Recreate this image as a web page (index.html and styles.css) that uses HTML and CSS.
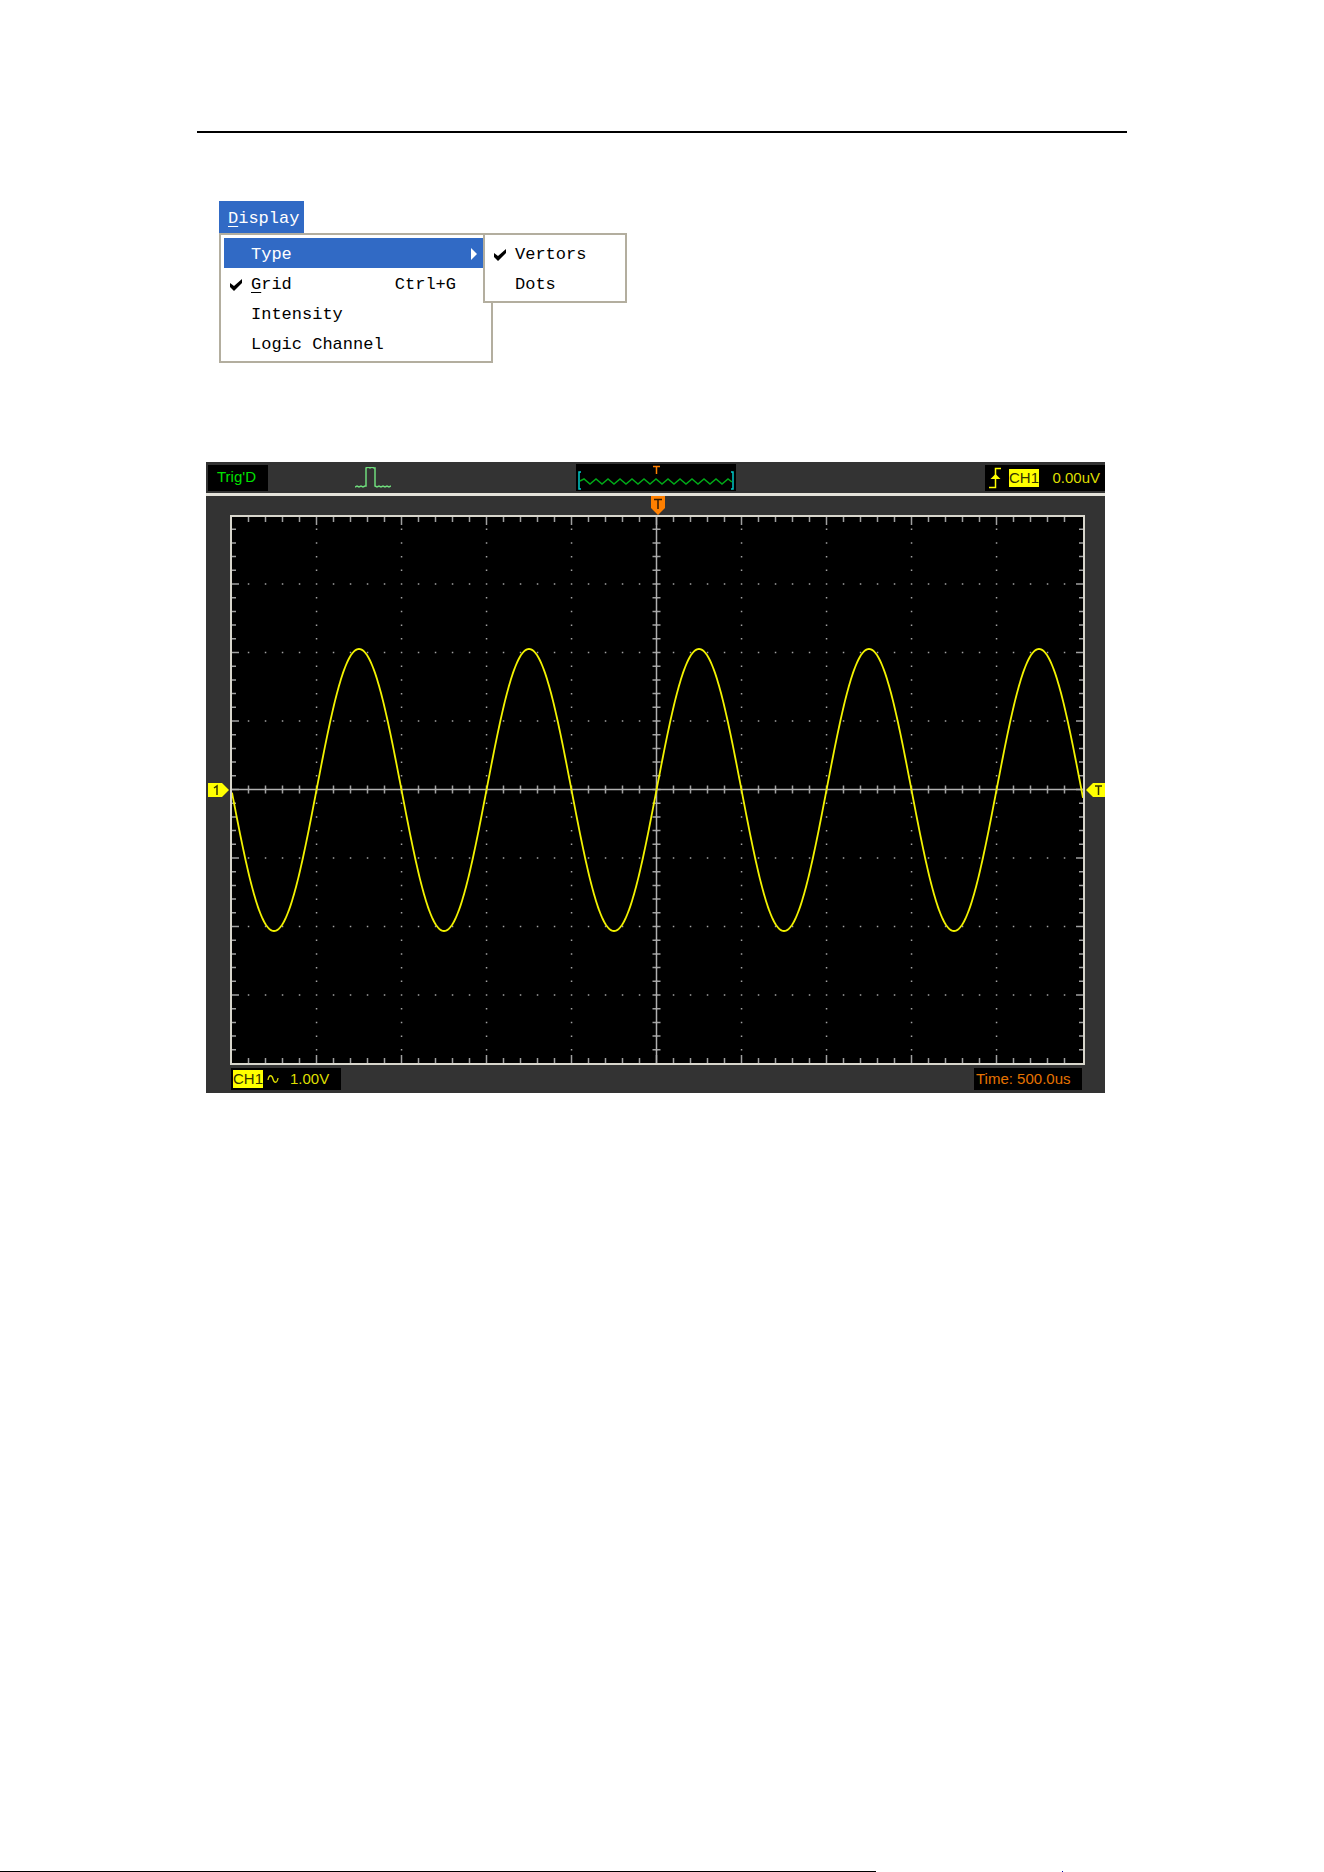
FILE: index.html
```html
<!DOCTYPE html>
<html lang="en">
<head>
    <meta charset="utf-8">
    <title>Display menu</title>
    <link rel="stylesheet" href="styles.css">
</head>
<body>
    <header class="page-header"></header>

    <main>
        <nav class="menu">
            <button class="menu-title" type="button"><u>D</u>isplay</button>
            <div class="menu-list">
                <button class="menu-item active" type="button">
                    <span class="check"></span>
                    <span class="label">Type</span>
                    <svg class="arrow" width="8" height="14" viewBox="0 0 8 14"><path d="M1 0v12l6-6z" fill="#fff"/></svg>
                </button>
                <button class="menu-item" type="button">
                    <span class="check"><svg width="14" height="14" viewBox="0 0 14 14"><path d="M1 5l4 3 8-7v4l-8 8-4-4z"/></svg></span>
                    <span class="label"><u>G</u>rid</span>
                    <span class="shortcut">Ctrl+G</span>
                </button>
                <button class="menu-item" type="button">
                    <span class="check"></span>
                    <span class="label">Intensity</span>
                </button>
                <button class="menu-item" type="button">
                    <span class="check"></span>
                    <span class="label">Logic Channel</span>
                </button>

                <div class="menu-list submenu">
                    <button class="menu-item" type="button">
                        <span class="check"><svg width="14" height="14" viewBox="0 0 14 14"><path d="M1 5l4 3 8-7v4l-8 8-4-4z"/></svg></span>
                        <span class="label">Vertors</span>
                    </button>
                    <button class="menu-item" type="button">
                        <span class="check"></span>
                        <span class="label">Dots</span>
                    </button>
                </div>
            </div>
        </nav>

        <section class="scope">
            <div class="status-bar">
                <div class="status-left">
                    <span class="box trig">Trig'D</span>
                    <svg class="pulse" width="36" height="22" viewBox="0 0 36 22">
                        <path d="M0 20l2-1 2 1 2-1 2 1 2-1h1V1l2-1 2 1 2-1 2 1h1v18l2 1 2-1 2 1 2-1 2 1 2-1 2 1 2-1" fill="none" stroke="#6fdc7c" stroke-width="1.5"/>
                    </svg>
                </div>
                <svg class="preview" width="160" height="27" viewBox="0 0 160 27">
                    <rect width="160" height="27" fill="#000"/>
                    <path d="M5 8H3v17h2M155 8h2v17h-2" fill="none" stroke="#00c8c8" stroke-width="1.5"/>
                    <path id="previewWave" fill="none" stroke="#00a818" stroke-width="1.5"/>
                    <path d="M77 2.500h7M80.500 2v8" fill="none" stroke="#ff8000" stroke-width="1.5"/>
                </svg>
                <div class="status-right">
                    <div class="box trigger">
                        <svg width="12" height="22" viewBox="0 0 12 22">
                            <path d="M0 20.500h6.500V1.500H12" fill="none" stroke="#ff0" stroke-width="1.5"/>
                            <path d="M6.500 7l5 5h-10z" fill="#ff0"/>
                        </svg>
                        <span class="channel">CH1</span>
                        <span class="level">0.00uV</span>
                    </div>
                </div>
            </div>

            <div class="screen">
                <svg class="marker-top" width="14" height="19" viewBox="0 0 14 19">
                    <path d="M0 0h14v12l-7 7-7-7z" fill="#ff8000"/>
                    <path d="M3 3.500h8M7 3v10" fill="none" stroke="#331a00" stroke-width="1.5"/>
                </svg>
                <svg class="marker-left" width="21" height="14" viewBox="0 0 21 14">
                    <path d="M0 0h14l7 7-7 7H0z" fill="#ff0"/>
                    <path d="M6 5l3-2v9" fill="none" stroke="#330" stroke-width="1.5"/>
                </svg>
                <svg class="plot" viewBox="0 0 855 550">
                    <rect width="855" height="550" fill="#000"/>
                    <path id="dots" fill="#a0a0a0"/>
                    <path id="ticks" fill="none" stroke="#a0a0a0" stroke-width="1.5"/>
                    <path d="M2 274.500h851M426.500 2v546" stroke="#b0b0b0" stroke-width="1.5"/>
                    <path id="wave" fill="none" stroke="#f2f200" stroke-width="1.8"/>
                    <rect class="frame" x="1" y="1" width="853" height="548" fill="none" stroke="#d8d6cc" stroke-width="2"/>
                </svg>
                <svg class="marker-right" width="19" height="14" viewBox="0 0 19 14">
                    <path d="M19 0H7L0 7l7 7h12z" fill="#ff0"/>
                    <path d="M9 3h7M12.500 3v9" fill="none" stroke="#330" stroke-width="1.5"/>
                </svg>
            </div>

            <div class="bottom-bar">
                <div class="box volts">
                    <span class="channel">CH1</span>
                    <svg width="12" height="12" viewBox="0 0 12 12"><path d="M1 7c1-6 4-5 5-1s4 5 5-1" fill="none" stroke="#dede00" stroke-width="1.3"/></svg>
                    <span>1.00V</span>
                </div>
                <span class="box time">Time: 500.0us</span>
            </div>
        </section>
    </main>

    <footer class="page-footer">
        <span class="footer-rule"></span>
        <span class="footer-dot"></span>
    </footer>

    <script>
        // 10 x 8 divisions, 5 steps in each
        const left = 1.5, midX = 426.5, midY = 274.5;
        const stepX = 17, stepY = 13.7;
        let dots = '';
        let ticks = '';

        for (let i = 1; i < 50; i++) {
            const x = left + i * stepX;
            const len = i % 5 === 0 ? 8 : 5;
            ticks += `M${x} 2v${len}M${x} 548v-${len}M${x} ${midY - 4}v8`;
            for (let j = 1; j < 8; j++) {
                dots += `M${x - 0.7} ${midY + (j - 4) * stepY * 5 - 0.7}h1.5v1.5h-1.5z`;
            }
        }

        for (let j = 1; j < 40; j++) {
            const y = midY + (j - 20) * stepY;
            const len = j % 5 === 0 ? 7 : 4;
            ticks += `M2 ${y}h${len}M853 ${y}h-${len}M${midX - 4} ${y}h8`;
            for (let i = 1; i < 10; i++) {
                dots += `M${left + i * stepX * 5 - 0.7} ${y - 0.7}h1.5v1.5h-1.5z`;
            }
        }

        document.getElementById('dots').setAttribute('d', dots);
        document.getElementById('ticks').setAttribute('d', ticks);

        // CH1 sine wave, one period is two divisions
        let wave = '';
        for (let x = 2; x <= 853; x++) {
            const y = 275 - 141 * Math.sin(Math.PI * (x - 86.5) / 85);
            wave += (wave ? 'L' : 'M') + x + ' ' + y.toFixed(1);
        }
        document.getElementById('wave').setAttribute('d', wave);

        // small zigzag in the status bar
        let zigzag = 'M4 17';
        for (let i = 0; i < 25; i++) {
            zigzag += `L${8 + i * 6} ${i % 2 ? 20 : 15}`;
        }
        document.getElementById('previewWave').setAttribute('d', zigzag + 'L156 18');
    </script>
</body>
</html>
```
FILE: styles.css
```css
body {
    display: flex;
    flex-direction: column;
    min-height: 100vh;
    margin: 0;
    background-color: #fff;
    font-family: "Liberation Sans", Arial, sans-serif;
}

.page-header {
    height: 131px;
    margin: 0 197px;
    border-bottom: 2px solid #000;
}

main {
    flex: 1;
    padding: 68px 219px 0 206px;
}

/* menu */
.menu {
    margin-left: 13px;
    font-family: "Liberation Mono", monospace;
}

.menu button {
    border: none;
    margin: 0;
    background: none;
    color: #000;
    font-family: inherit;
    font-size: 17px;
    line-height: 20px;
    text-align: left;
}

.menu u {
    text-underline-offset: 3px;
}

.menu .menu-title {
    display: block;
    width: 85px;
    height: 32px;
    padding: 4px 0 0 9px;
    background-color: #316ac5;
    color: #fff;
}

.menu-list {
    position: relative;
    box-sizing: border-box;
    width: 274px;
    padding: 3px;
    border: 2px solid #b3ae9f;
    background-color: #fff;
}

.menu .menu-item {
    display: flex;
    align-items: center;
    width: 100%;
    height: 30px;
    padding: 3px 32px 0 5px;
}

.menu .menu-item.active {
    background-color: #316ac5;
    color: #fff;
    padding-right: 10px;
}

.check {
    display: flex;
    width: 22px;
}

.label {
    flex: 1;
    white-space: nowrap;
}

.submenu {
    position: absolute;
    top: -2px;
    left: 262px;
    width: 144px;
}

.menu .submenu .menu-item {
    padding-right: 0;
}

/* oscilloscope */
.scope {
    margin-top: 99px;
    background-color: #333;
    color: #dede00;
    font-size: 15px;
    line-height: 18px;
}

.status-bar {
    display: grid;
    grid-template-columns: 1fr 160px 1fr;
    align-items: center;
    height: 31px;
    border-bottom: 3px solid #e4e2da;
}

.box {
    display: flex;
    align-items: center;
    box-sizing: border-box;
    background-color: #000;
    white-space: nowrap;
}

.status-left {
    display: flex;
    align-items: center;
    gap: 87px;
    padding-left: 2px;
}

.trig {
    width: 60px;
    height: 26px;
    padding: 0 0 2px 9px;
    color: #00e000;
}

.status-right {
    display: flex;
    justify-content: flex-end;
}

.trigger {
    width: 120px;
    height: 26px;
    padding: 0 5px 0 4px;
}

.channel {
    width: 30px;
    background-color: #ff0;
    color: #330;
    text-align: center;
}

.trigger .channel {
    margin-left: 8px;
}

.level {
    margin-left: auto;
}

.screen {
    display: grid;
    grid-template-columns: 24px 1fr 20px;
    grid-template-rows: 19px auto;
    align-items: center;
}

.marker-top {
    grid-column: 2;
    justify-self: center;
}

.marker-left {
    grid-column: 1;
    grid-row: 2;
    justify-self: center;
}

.plot {
    display: block;
    grid-column: 2;
    width: 100%;
}

.marker-right {
    justify-self: end;
}

.bottom-bar {
    display: flex;
    justify-content: space-between;
    padding: 3px 23px 3px 25px;
}

.volts {
    gap: 4px;
    width: 110px;
    height: 22px;
    padding-left: 2px;
}

.volts span:last-child {
    margin-left: 7px;
}

.time {
    width: 108px;
    height: 22px;
    padding-left: 2px;
    color: #e67300;
}

/* bottom edge of the page */
.page-footer {
    display: flex;
    height: 1px;
}

.footer-rule {
    width: 66.2%;
    background-color: #000;
}

.footer-dot {
    width: 1px;
    margin-left: 14%;
    background-color: #00a;
}
```
